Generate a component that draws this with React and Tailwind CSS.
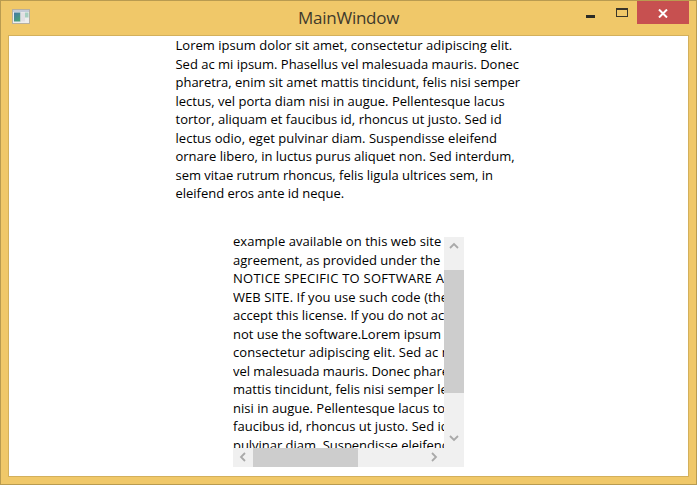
const paragraph = [
  ["Lorem ipsum dolor sit amet, consectetur adipiscing elit.", "tracking-[0.03px]"],
  ["Sed ac mi ipsum. Phasellus vel malesuada mauris. Donec", "tracking-[-0.01px]"],
  ["pharetra, enim sit amet mattis tincidunt, felis nisi semper", "tracking-[-0.02px]"],
  ["lectus, vel porta diam nisi in augue. Pellentesque lacus", "tracking-[0.01px]"],
  ["tortor, aliquam et faucibus id, rhoncus ut justo. Sed id", "tracking-[0.02px]"],
  ["lectus odio, eget pulvinar diam. Suspendisse eleifend", "tracking-[0.03px]"],
  ["ornare libero, in luctus purus aliquet non. Sed interdum,", "tracking-[-0.02px]"],
  ["sem vitae rutrum rhoncus, felis ligula ultrices sem, in", "tracking-[-0.02px]"],
  ["eleifend eros ante id neque.", "tracking-[-0.02px]"],
];

const license = [
  ["example available on this web site", "tracking-[0.05px]"],
  ["agreement, as provided under the", "tracking-[0.01px]"],
  ["NOTICE SPECIFIC TO SOFTWARE A", "tracking-[0.24px]"],
  ["WEB SITE. If you use such code (the", "tracking-[0.06px]"],
  ["accept this license. If you do not acc", "tracking-[0.03px]"],
  ["not use the software.Lorem ipsum", "tracking-[-0.01px]"],
  ["consectetur adipiscing elit. Sed ac m", "tracking-[0.06px]"],
  ["vel malesuada mauris. Donec phare", "tracking-[-0.03px]"],
  ["mattis tincidunt, felis nisi semper le", "tracking-[0.02px]"],
  ["nisi in augue. Pellentesque lacus to", "tracking-[0.02px]"],
  ["faucibus id, rhoncus ut justo. Sed id", "tracking-[0.02px]"],
  ["pulvinar diam. Suspendisse eleifend", "tracking-[-0.03px]"],
];

function Lines({ items }) {
  return items.map(([text, tracking]) => (
    <div key={text} className={`h-[18.5px] whitespace-nowrap leading-[18.5px] ${tracking}`}>
      {text}
    </div>
  ));
}

function Chevron({ d, className }) {
  return (
    <svg viewBox="0 0 10 10" className={`size-[10px] shrink-0 ${className}`} fill="none" stroke="#a9a9a9" strokeWidth="1.8">
      <path d={d} />
    </svg>
  );
}

function TitleBar() {
  return (
    <header className="flex h-[34px] shrink-0 items-start">
      <svg viewBox="0 0 18 15" className="mt-2 ml-[11px] h-[15px] w-[18px] shrink-0">
        <defs>
          <linearGradient id="pane" x1="0" y1="0" x2="0.6" y2="1">
            <stop offset="0" stopColor="#4478a8" />
            <stop offset="1" stopColor="#4aa078" />
          </linearGradient>
        </defs>
        <rect x="0.5" y="0.5" width="17" height="14" fill="#eeeeee" stroke="#b7b0a0" />
        <rect x="1" y="1" width="16" height="2" fill="#c3cbd9" />
        <rect x="2" y="3.5" width="6.5" height="9" fill="url(#pane)" />
        <rect x="8.5" y="3.5" width="4.5" height="9" fill="#e2e0e4" />
        <rect x="13" y="3.5" width="3.5" height="5" fill="#a7cfc0" />
      </svg>
      <h1 className="mt-[5px] ml-[268px] w-[104px] whitespace-nowrap text-[17px] leading-6 tracking-[-0.25px] text-[#3f3a2c]">
        MainWindow
      </h1>
      <div className="mt-[14px] ml-[184px] h-[3px] w-[9px] bg-[#2b2b25]" />
      <div className="mt-[7px] ml-[21px] h-[9px] w-3 border border-t-2 border-[#3a3629]" />
      <div className="ml-[9px] flex h-[23px] w-[52px] items-center justify-center bg-[#c75050] pt-px">
        <svg viewBox="0 0 10 9" className="h-[9px] w-[10px]" fill="none" stroke="white" strokeWidth="2">
          <path d="M1 .5 9 8.5M9 .5 1 8.5" />
        </svg>
      </div>
    </header>
  );
}

function ScrollBox() {
  return (
    <div className="mt-[34px] ml-[224px] grid h-[230px] w-[231px] grid-cols-[211px_20px] grid-rows-[211px_19px]">
      <div className="overflow-hidden">
        <div className="-mt-[4.6px]">
          <Lines items={license} />
        </div>
      </div>
      <div className="flex flex-col items-center bg-[#f0f0f0]">
        <div className="flex h-[33px] pt-1">
          <Chevron d="M1 7 5 3l4 4" className="" />
        </div>
        <div className="h-[123px] w-full bg-[#cdcdcd]" />
        <Chevron d="M1 3 5 7l4-4" className="mt-[40px]" />
      </div>
      <div className="flex items-center bg-[#f0f0f0]">
        <Chevron d="M7 1 3 5l4 4" className="mx-[5px]" />
        <div className="h-full w-[105px] bg-[#cdcdcd]" />
        <Chevron d="M3 1 7 5 3 9" className="ml-[71px]" />
      </div>
      <div className="bg-[#f0f0f0]" />
    </div>
  );
}

export default function App() {
  return (
    <div className="flex h-[485px] w-[697px] flex-col overflow-hidden border border-[#b99b50] bg-[#f0c869] font-['Open_Sans','Noto_Sans',sans-serif] text-[13px] text-black">
      <TitleBar />
      <main className="mr-[7px] ml-[7px] h-[442px] border border-[#d3b05c] bg-white">
        <div className="pt-[0.3px] ml-[166.5px]">
          <Lines items={paragraph} />
        </div>
        <ScrollBox />
      </main>
    </div>
  );
}
